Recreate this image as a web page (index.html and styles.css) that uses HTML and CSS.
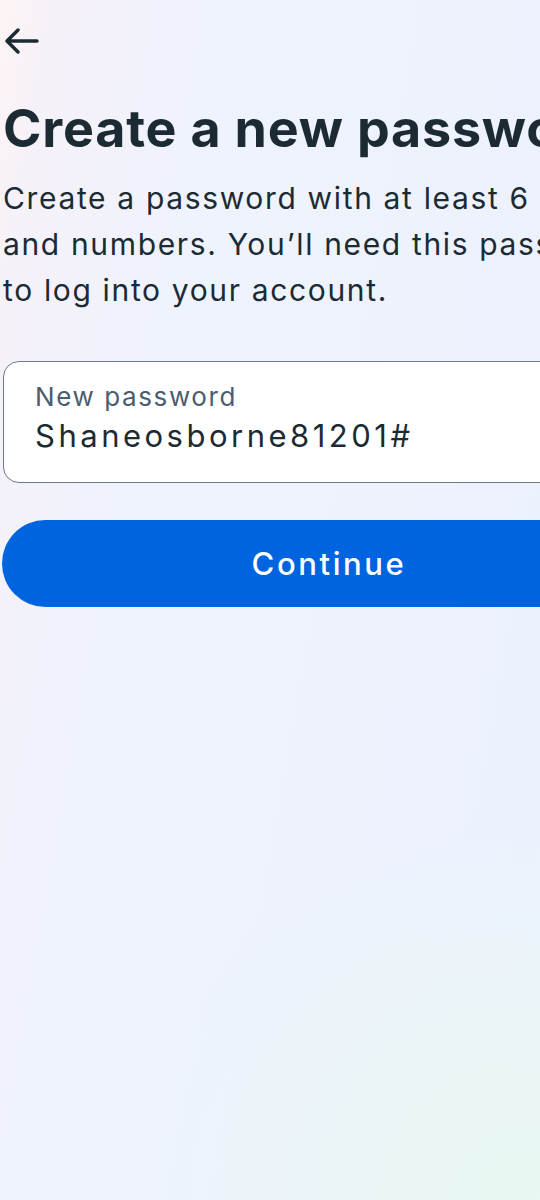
FILE: index.html
```html
<!DOCTYPE html>
<html lang="en">
<head>
    <meta charset="UTF-8">
    <meta name="viewport" content="width=device-width, initial-scale=1.0">
    <title>Create a new password</title>
    <link rel="stylesheet" href="styles.css">
</head>
<body>

    <div class="page">
        <button class="back" aria-label="Back">
            <svg width="36" height="26" viewBox="0 0 36 26">
                <path d="M34 13H4M15 2L4 13l11 11" fill="none" stroke="#1c2b33" stroke-width="3.4" stroke-linecap="round" stroke-linejoin="round"/>
            </svg>
        </button>

        <h1>Create a new password</h1>
        <p class="intro">Create a password with at least 6 letters and numbers. You’ll need this password to log into your account.</p>

        <div class="field">
            <label for="new_password">New password</label>
            <input type="text" id="new_password" value="Shaneosborne81201#">
        </div>

        <button class="continue">Continue</button>
    </div>

</body>
</html>
```

FILE: styles.css
```css
html, body {
    overflow: hidden;
}
body {
    font-family: Inter, "Noto Sans", sans-serif;
    color: #1c2b33;
    margin: 0;
    padding: 0;
    min-height: 1200px;
    background:
        radial-gradient(ellipse 420px 380px at 100% 100%, rgba(232, 248, 240, 0.9), rgba(232, 248, 240, 0)),
        linear-gradient(100deg, #fdf4f4 0%, #f5f1f9 8%, #eff3fd 30%, #ebf1fd 100%);
}
.page {
    width: 654px;
    padding: 0 0 0 3px;
}
.back {
    display: block;
    background: none;
    border: none;
    padding: 0;
    margin: 28px 0 0 0;
    width: 36px;
    height: 26px;
    cursor: pointer;
}
.back svg {
    display: block;
}
h1 {
    margin: 43px 0 0;
    font-size: 52px;
    line-height: 64px;
    font-weight: 700;
    letter-spacing: 0.8px;
    white-space: nowrap;
}
.intro {
    margin: 14px 0 0;
    font-size: 30px;
    line-height: 46px;
    letter-spacing: 1.65px;
}
.field {
    margin-top: 48px;
    height: 122px;
    border: 1.5px solid #6b7a8c;
    border-radius: 16px;
    background: #ffffff;
    padding: 19px 31px 0;
    box-sizing: border-box;
}
.field label {
    display: block;
    font-size: 26px;
    line-height: 32px;
    letter-spacing: 1.6px;
    color: #4b5d70;
}
.field input {
    display: block;
    width: 100%;
    border: none;
    outline: none;
    padding: 0;
    margin-top: 3px;
    font-family: inherit;
    font-size: 31px;
    line-height: 40px;
    height: 40px;
    letter-spacing: 3.5px;
    color: #1c2b33;
    background: transparent;
}
.continue {
    display: block;
    width: 654px;
    height: 87px;
    margin: 37px 0 0 -1px;
    border: none;
    border-radius: 44px;
    background-color: #0064e0;
    color: white;
    font-family: inherit;
    font-size: 31px;
    font-weight: 500;
    letter-spacing: 2.6px;
    cursor: pointer;
}
```
